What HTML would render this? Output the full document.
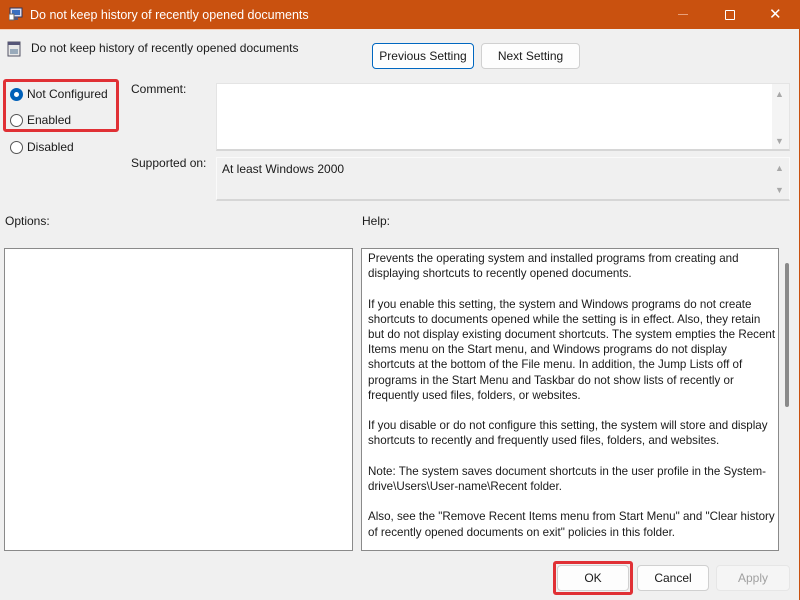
<!DOCTYPE html><html><head><style>
*{margin:0;padding:0;box-sizing:border-box}
body{width:800px;height:600px;background:#f0f0f0;font-family:"Liberation Sans",sans-serif;font-size:12px;color:#1a1a1a;position:relative;overflow:hidden}
.a{position:absolute}
.tb{left:0;top:0;width:800px;height:29px;background:#c9510f;color:#fff;font-size:12.5px}
.btn{position:absolute;background:#fdfdfd;border:1px solid #d0d0d0;border-radius:4px;text-align:center;line-height:24px;font-size:12px}
.rad{position:absolute;width:13px;height:13px;border-radius:50%;border:1px solid #555;background:#fff}
.sb{position:absolute;color:#a8a8a8;font-size:9px}
</style></head><body>
<div class="a tb">
<svg class="a" style="left:9px;top:7px" width="16" height="15"><rect x="1" y="1" width="12" height="9" fill="#dde" stroke="#335"/><rect x="3" y="3" width="8" height="5" fill="#3a6fc0"/><rect x="5" y="10" width="4" height="3" fill="#557"/><rect x="0" y="7" width="5" height="6" fill="#fff" stroke="#666"/></svg>
<div class="a" style="left:30px;top:8px">Do not keep history of recently opened documents</div>
<div class="a" style="left:678px;top:14px;width:10px;height:1px;background:#e8a07a"></div>
<div class="a" style="left:725px;top:10px;width:10px;height:10px;border:1px solid #fff;border-radius:1px"></div>
<div class="a" style="left:769px;top:5px;font-size:15px">✕</div>
</div>
<div class="a" style="left:0;top:29px;width:260px;height:1px;background:#f6d0b8"></div>
<div class="a" style="left:799px;top:29px;width:1px;height:571px;background:#c9510f"></div>
<svg class="a" style="left:7px;top:41px" width="14" height="16"><rect x="1" y="1" width="12" height="14" fill="#e8e8e8" stroke="#556"/><rect x="1" y="1" width="12" height="3" fill="#557"/><rect x="3" y="8" width="8" height="5" fill="#9ab" /></svg>
<div class="a" style="left:31px;top:41px">Do not keep history of recently opened documents</div>
<div class="btn" style="left:372px;top:43px;width:102px;height:26px;border:1px solid #0067c0;box-shadow:inset 0 0 0 1px #fff">Previous Setting</div>
<div class="btn" style="left:481px;top:43px;width:99px;height:26px">Next Setting</div>
<div class="a" style="left:3px;top:79px;width:116px;height:53px;border:3px solid #e03035;border-radius:3px"></div>
<div class="rad" style="left:10px;top:88px;border:4px solid #0060b8"></div><div class="a" style="left:27px;top:87px">Not Configured</div>
<div class="rad" style="left:10px;top:114px"></div><div class="a" style="left:27px;top:113px">Enabled</div>
<div class="rad" style="left:10px;top:141px"></div><div class="a" style="left:27px;top:140px">Disabled</div>
<div class="a" style="left:131px;top:82px">Comment:</div>
<div class="a" style="left:216px;top:83px;width:574px;height:68px;background:#fff;border:1px solid #e4e4e4;border-bottom:2px solid #d6d6d6"></div>
<div class="a" style="left:772px;top:84px;width:17px;height:65px;background:#f4f4f4"></div>
<div class="sb" style="left:775px;top:89px">▲</div><div class="sb" style="left:775px;top:136px">▼</div>
<div class="a" style="left:131px;top:156px">Supported on:</div>
<div class="a" style="left:216px;top:157px;width:574px;height:44px;background:#f0f0f0;border:1px solid #fafafa;border-bottom:2px solid #d6d6d6"></div>
<div class="a" style="left:222px;top:162px">At least Windows 2000</div>
<div class="sb" style="left:775px;top:163px">▲</div><div class="sb" style="left:775px;top:185px">▼</div>
<div class="a" style="left:5px;top:214px">Options:</div>
<div class="a" style="left:362px;top:214px">Help:</div>
<div class="a" style="left:4px;top:248px;width:349px;height:303px;background:#fff;border:1px solid #8a8a8a"></div>
<div class="a" style="left:361px;top:248px;width:418px;height:303px;background:#fff;border:1px solid #8a8a8a"></div>
<div class="a" style="left:785px;top:263px;width:4px;height:144px;background:#8a8a8a;border-radius:2px"></div>
<div class="a" style="left:368px;top:251px;width:408px;line-height:15.2px;font-size:11.6px">Prevents the operating system and installed programs from creating and displaying shortcuts to recently opened documents.<br><br>If you enable this setting, the system and Windows programs do not create shortcuts to documents opened while the setting is in effect. Also, they retain but do not display existing document shortcuts. The system empties the Recent Items menu on the Start menu, and Windows programs do not display shortcuts at the bottom of the File menu. In addition, the Jump Lists off of programs in the Start Menu and Taskbar do not show lists of recently or frequently used files, folders, or websites.<br><br>If you disable or do not configure this setting, the system will store and display shortcuts to recently and frequently used files, folders, and websites.<br><br>Note: The system saves document shortcuts in the user profile in the System-drive\Users\User-name\Recent folder.<br><br>Also, see the "Remove Recent Items menu from Start Menu" and "Clear history of recently opened documents on exit" policies in this folder.</div>
<div class="a" style="left:553px;top:561px;width:80px;height:34px;border:3px solid #e03035;border-radius:3px"></div>
<div class="btn" style="left:557px;top:565px;width:72px;height:26px">OK</div>
<div class="btn" style="left:637px;top:565px;width:72px;height:26px">Cancel</div>
<div class="btn" style="left:716px;top:565px;width:74px;height:26px;background:#f5f5f5;border-color:#e6e6e6;color:#a0a0a0">Apply</div>
</body></html>
